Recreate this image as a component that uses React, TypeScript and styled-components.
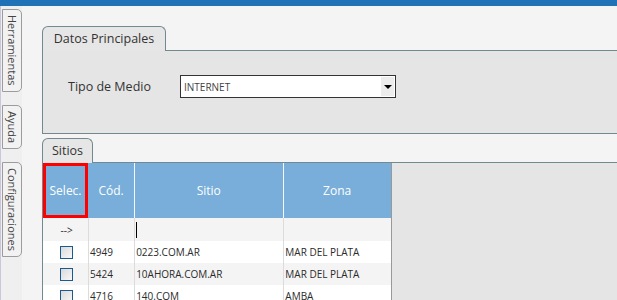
import React from 'react';
import styled, { createGlobalStyle } from 'styled-components';

const GlobalStyle = createGlobalStyle`
    html, body {
        margin: 0;
        padding: 0;
        background: #f4f4f4;
    }
    body {
        font-family: 'Open Sans', 'Liberation Sans', sans-serif;
        color: #333;
    }
`;

const BORDER = '#728a8f';

const Page = styled.div`
    display: flex;
    flex-direction: column;
    width: 617px;
    height: 300px;
    overflow: hidden;
    background: #f4f4f4;
`;

const TopBar = styled.div`
    height: 6px;
    flex-shrink: 0;
    background: #1f72b6;
`;

const Body = styled.div`
    display: flex;
    flex: 1;
    min-height: 0;
`;

const SideBar = styled.div`
    width: 20px;
    flex-shrink: 0;
    display: flex;
    flex-direction: column;
    gap: 13px;
    padding: 3px 0 0 1px;
    background: #efefef;
    border-left: 1px solid #cbc6dd;
`;

const SideTab = styled.div`
    writing-mode: vertical-rl;
    width: 18px;
    padding: 5px 0;
    border: 1px solid #9c9c9c;
    border-radius: 0 5px 5px 0;
    background: #f2f2f2;
    font-size: 11px;
    line-height: 18px;
    color: #444;
    text-align: center;
`;

const Main = styled.div`
    flex: 1;
    min-width: 0;
    display: flex;
    flex-direction: column;
    gap: 4px;
    padding: 20px 0 0 20px;
`;

const Section = styled.section<{ $grow?: boolean }>`
    display: flex;
    flex-direction: column;
    flex: ${(p) => (p.$grow ? 1 : 'none')};
    min-height: 0;
`;

const TabStrip = styled.div`
    display: flex;
    height: 25px;
    flex-shrink: 0;
`;

const Tab = styled.div<{ $w: number }>`
    width: ${(p) => p.$w}px;
    box-sizing: border-box;
    border: 1px solid ${BORDER};
    border-bottom: none;
    border-radius: 6px 6px 0 0;
    background: #e6e6e6;
    font-size: 12.5px;
    line-height: 24px;
    text-align: center;
    color: #333;
`;

const TabFiller = styled.div`
    flex: 1;
    border-bottom: 1px solid ${BORDER};
`;

const FormPanel = styled.div`
    height: 83px;
    box-sizing: border-box;
    background: #e5e5e5;
    border-left: 1px solid ${BORDER};
    border-bottom: 1px solid ${BORDER};
    padding: 24px 0 0 25px;
`;

const FieldRow = styled.div`
    display: flex;
    align-items: center;
`;

const Label = styled.label`
    width: 112px;
    font-size: 12.5px;
    color: #333;
`;

const Select = styled.div`
    display: flex;
    align-items: center;
    justify-content: space-between;
    width: 216px;
    height: 23px;
    box-sizing: border-box;
    border: 1px solid #333;
    background: #fff;
    padding: 1px 1px 1px 3px;
    font-size: 10px;
    color: #444;
`;

const ArrowBox = styled.span`
    display: flex;
    align-items: center;
    justify-content: center;
    width: 13px;
    height: 19px;
    background: #ededed;
    &::after {
        content: '';
        border-left: 4px solid transparent;
        border-right: 4px solid transparent;
        border-top: 4px solid #000;
    }
`;

const GridPanel = styled.div`
    flex: 1;
    min-height: 0;
    background: #e5e5e5;
    border-left: 1px solid ${BORDER};
`;

const Table = styled.table`
    border-collapse: collapse;
    table-layout: fixed;
    width: 349px;
    border-right: 1px solid #999;
`;

const HeadCell = styled.th<{ $marked?: boolean; $sep?: boolean }>`
    height: 55px;
    padding: 0;
    background: #78aed9;
    color: #fff;
    font-size: 12px;
    font-weight: normal;
    text-align: center;
    box-shadow: ${(p) =>
        p.$marked ? 'inset 0 0 0 3px #ff0000' : p.$sep ? 'inset 1px 0 0 #f4f8fc' : 'none'};
`;

const Row = styled.tr<{ $alt?: boolean }>`
    background: ${(p) => (p.$alt ? '#f4f4f4' : '#fff')};
`;

const Cell = styled.td<{ $center?: boolean; $h?: number }>`
    height: ${(p) => p.$h || 22}px;
    padding: 0 0 0 2px;
    font-size: 10px;
    color: #2b2b2b;
    text-align: ${(p) => (p.$center ? 'center' : 'left')};
    white-space: nowrap;
    overflow: hidden;
    & + & {
        box-shadow: inset 1px 0 0 #dcdcdc;
    }
`;

const Caret = styled.span`
    display: inline-block;
    width: 1px;
    height: 16px;
    background: #000;
    vertical-align: middle;
`;

const Check = styled.span`
    display: inline-block;
    width: 13px;
    height: 13px;
    box-sizing: border-box;
    border: 1px solid #1c5a8e;
    background: linear-gradient(135deg, #d9d9d9, #f8f8f8);
    vertical-align: middle;
`;

const sitios = [
    { cod: '4949', sitio: '0223.COM.AR', zona: 'MAR DEL PLATA' },
    { cod: '5424', sitio: '10AHORA.COM.AR', zona: 'MAR DEL PLATA' },
    { cod: '4716', sitio: '140.COM', zona: 'AMBA' },
];

const App = () => (
    <Page>
        <GlobalStyle />
        <TopBar />
        <Body>
            <SideBar>
                <SideTab>Herramientas</SideTab>
                <SideTab>Ayuda</SideTab>
                <SideTab>Configuraciones</SideTab>
            </SideBar>
            <Main>
                <Section>
                    <TabStrip>
                        <Tab $w={124}>Datos Principales</Tab>
                        <TabFiller />
                    </TabStrip>
                    <FormPanel>
                        <FieldRow>
                            <Label>Tipo de Medio</Label>
                            <Select>
                                INTERNET
                                <ArrowBox />
                            </Select>
                        </FieldRow>
                    </FormPanel>
                </Section>
                <Section $grow>
                    <TabStrip>
                        <Tab $w={51}>Sitios</Tab>
                        <TabFiller />
                    </TabStrip>
                    <GridPanel>
                        <Table>
                            <colgroup>
                                <col style={{ width: 45 }} />
                                <col style={{ width: 46 }} />
                                <col style={{ width: 149 }} />
                                <col style={{ width: 108 }} />
                            </colgroup>
                            <thead>
                                <tr>
                                    <HeadCell $marked>Selec.</HeadCell>
                                    <HeadCell>Cód.</HeadCell>
                                    <HeadCell $sep>Sitio</HeadCell>
                                    <HeadCell $sep>Zona</HeadCell>
                                </tr>
                            </thead>
                            <tbody>
                                <Row $alt>
                                    <Cell $center $h={23}>--&gt;</Cell>
                                    <Cell $h={23} />
                                    <Cell $h={23}>
                                        <Caret />
                                    </Cell>
                                    <Cell $h={23} />
                                </Row>
                                {sitios.map((s, i) => (
                                    <Row key={s.cod} $alt={i % 2 === 1}>
                                        <Cell $center>
                                            <Check />
                                        </Cell>
                                        <Cell>{s.cod}</Cell>
                                        <Cell>{s.sitio}</Cell>
                                        <Cell>{s.zona}</Cell>
                                    </Row>
                                ))}
                            </tbody>
                        </Table>
                    </GridPanel>
                </Section>
            </Main>
        </Body>
    </Page>
);

export default App;
